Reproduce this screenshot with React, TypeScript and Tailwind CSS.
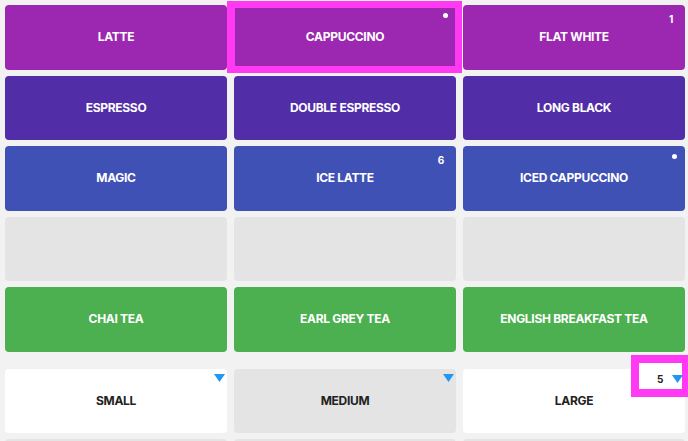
import React from 'react';

type Badge = { kind: 'dot' } | { kind: 'num'; value: string } | null;

interface Item {
  label: string;
  color: string;
  badge?: Badge;
}

const ROWS: Item[][] = [
  [
    { label: 'LATTE', color: 'bg-[#9c27b0]' },
    { label: 'CAPPUCCINO', color: 'bg-[#9c27b0]', badge: { kind: 'dot' } },
    { label: 'FLAT WHITE', color: 'bg-[#9c27b0]', badge: { kind: 'num', value: '1' } },
  ],
  [
    { label: 'ESPRESSO', color: 'bg-[#512da8]' },
    { label: 'DOUBLE ESPRESSO', color: 'bg-[#512da8]' },
    { label: 'LONG BLACK', color: 'bg-[#512da8]' },
  ],
  [
    { label: 'MAGIC', color: 'bg-[#3f51b5]' },
    { label: 'ICE LATTE', color: 'bg-[#3f51b5]', badge: { kind: 'num', value: '6' } },
    { label: 'ICED CAPPUCCINO', color: 'bg-[#3f51b5]', badge: { kind: 'dot' } },
  ],
  [
    { label: '', color: 'bg-[#e4e4e4]' },
    { label: '', color: 'bg-[#e4e4e4]' },
    { label: '', color: 'bg-[#e4e4e4]' },
  ],
  [
    { label: 'CHAI TEA', color: 'bg-[#4caf50]' },
    { label: 'EARL GREY TEA', color: 'bg-[#4caf50]' },
    { label: 'ENGLISH BREAKFAST TEA', color: 'bg-[#4caf50]' },
  ],
];

function Triangle() {
  return (
    <svg width="11" height="8" viewBox="0 0 11 8" className="block">
      <polygon points="0,0 11,0 5.5,8" fill="#2196f3" />
    </svg>
  );
}

function ProductTile({ item }: { item: Item }) {
  const b = item.badge;
  return (
    <div
      className={`relative h-[64.5px] rounded-[4px] ${item.color} flex items-center justify-center text-white text-[12px] font-bold tracking-[-0.3px]`}
    >
      {item.label}
      {b && b.kind === 'dot' && (
        <span className="absolute top-[8px] right-[8px] w-[5px] h-[5px] rounded-full bg-white" />
      )}
      {b && b.kind === 'num' && (
        <span className="absolute top-[9px] right-[12px] text-[10px] font-bold leading-none">{b.value}</span>
      )}
    </div>
  );
}

function SizeTile({ label, bg, count, highlight }: { label: string; bg: string; count?: string; highlight?: boolean }) {
  return (
    <div className={`relative h-[64px] rounded-[4px] ${bg} flex items-center justify-center text-[#222] text-[12px] font-bold tracking-[-0.3px]`}>
      {label}
      {highlight && (
        <div className="absolute left-[168px] top-[-14px] w-[57px] h-[42px] border-[8px] border-r-[6px] border-[#ff3af2] bg-white" />
      )}
      <div className="absolute top-[5px] right-[2px] flex items-center gap-[9px]">
        {count && <span className="text-[10px] font-bold leading-none text-[#222]">{count}</span>}
        <Triangle />
      </div>
    </div>
  );
}

export default function App() {
  return (
    <div
      className="w-[688px] h-[441px] overflow-hidden bg-[#f2f2f2] pl-[5px] pr-[3px] pt-[5px]"
      style={{ fontFamily: 'Inter, "Noto Sans", sans-serif' }}
    >
      <div className="relative">
        <div className="grid grid-cols-3 gap-x-[7px] gap-y-[6px]">
          {ROWS.flat().map((item, i) => (
            <ProductTile key={i} item={item} />
          ))}
        </div>
        {/* highlight around cappuccino */}
        <div className="absolute left-[222px] top-[-4px] w-[235px] h-[72px] border-[7px] border-l-[8px] border-[#ff3af2] pointer-events-none" />
      </div>

      <div className="grid grid-cols-3 gap-x-[7px] gap-y-[6px] mt-[17px]">
        <SizeTile label="SMALL" bg="bg-white" />
        <SizeTile label="MEDIUM" bg="bg-[#e4e4e4]" />
        <SizeTile label="LARGE" bg="bg-white" count="5" highlight />
        <div className="h-[64px] rounded-[4px] bg-[#e4e4e4]" />
        <div className="h-[64px] rounded-[4px] bg-[#e4e4e4]" />
        <div className="h-[64px] rounded-[4px] bg-[#e4e4e4]" />
      </div>
    </div>
  );
}
